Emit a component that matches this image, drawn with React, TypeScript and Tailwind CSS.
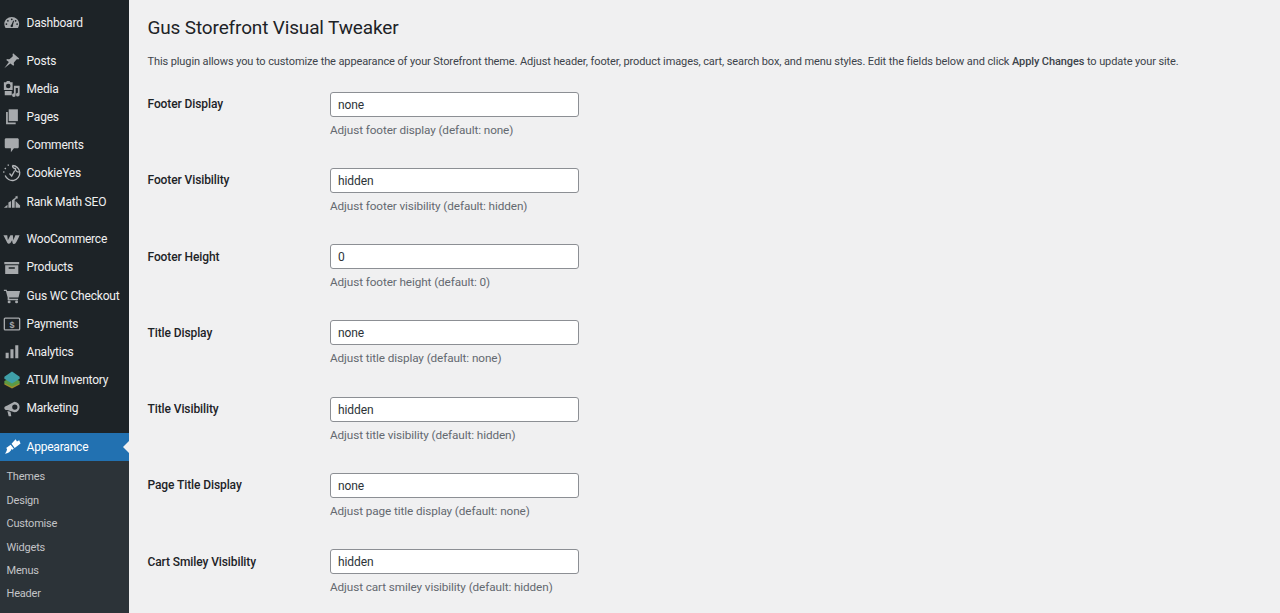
import type { ReactNode } from 'react';

const icon = 'h-[17.500px] w-[17.500px] fill-[#a7aaad]';

const Dashboard = () => (
  <svg viewBox="0 0 20 20" className={icon}>
    <path fillRule="evenodd" d="M10 3.500c-4.600 0-8.500 3.400-8.500 8 0 1.700.5 3.200 1.400 4.500h14.200c.9-1.300 1.400-2.800 1.400-4.500 0-4.600-3.900-8-8.500-8zM10 5a1 1 0 110 2 1 1 0 010-2zM5.600 6.800a1 1 0 110 2 1 1 0 010-2zM14.400 6.800a1 1 0 110 2 1 1 0 010-2zM3.900 10.500a1 1 0 110 2 1 1 0 010-2zM16.100 10.500a1 1 0 110 2 1 1 0 010-2zM11.700 7.500l.9.400-1.300 4.900c.3.400.4.800.2 1.300-.3.800-1.200 1.100-1.900.8-.8-.3-1.100-1.200-.8-1.900.2-.5.600-.8 1-.9z" />
  </svg>
);
const Pin = () => (
  <svg viewBox="0 0 20 20" className={icon}>
    <path d="M11.500 1.500l7 6-1 1.200c-.8-.4-1.700-.4-2.300.2l-2.500 2.800c-.5.700-.5 2 .1 3l-1 1.100-3.400-2.700L1.500 18.500l5.200-7-3-2.500 1-1.100c1 .4 2.200.5 3 0l3-2.500c.6-.7.600-1.700.2-2.600z" />
  </svg>
);
const Media = () => (
  <svg viewBox="0 0 20 20" className={icon}>
    <path fillRule="evenodd" d="M1 2.500h2.500l1-1.500h3l1 1.500H11v9H1zM6 4.200a2.600 2.600 0 100 5.200 2.600 2.600 0 000-5.200z" />
    <path d="M12.500 6.500H19v10.200a2.100 2.100 0 11-2-2V9h-2.500v8.200a2.100 2.100 0 11-2-2zM2 12.500h8v5H2z" />
  </svg>
);
const Pages = () => (
  <svg viewBox="0 0 20 20" className={icon}>
    <path d="M6.500 1.500h10.500v13.500H6.500z" />
    <path d="M3.500 4.500h2v12h9v2h-11z" />
  </svg>
);
const Comment = () => (
  <svg viewBox="0 0 20 20" className={icon}>
    <path d="M3.500 2.500h13c.8 0 1.500.7 1.500 1.500v8.500c0 .8-.7 1.500-1.500 1.500h-4L9 18.500V14H3.500c-.8 0-1.500-.7-1.500-1.500V4c0-.8.7-1.500 1.500-1.500z" />
  </svg>
);
const Cookie = () => (
  <svg viewBox="0 0 20 20" className="h-[20px] w-[20px] fill-none stroke-[#b4b7ba] stroke-[1.300]">
    <path d="M10.500 2.500a7.500 7.500 0 11-7.300 10M10.500 2.500a2.800 2.800 0 003 3 3 3 0 003.300 3.500" />
    <path d="M7.500 10.500l2.200 2.500 3-5.500" />
    <path d="M2.800 5l1 1M6 1.500l.5 1.200M1.200 9h1.200" />
  </svg>
);
const RankMath = () => (
  <svg viewBox="0 0 20 20" className="h-[18px] w-[18px] fill-[#a7aaad]">
    <path d="M1 16.500l4-3.500v3.500zM6 16.500v-6l3-1.500v7.500zM10 16.500V8l3-2.500v11zM14 16.500V9l5 5v2.500zM13 4.500l3-1.500.5 3.500-1-.7-2.500 2-.8-1 2-1.600z" />
  </svg>
);
const Woo = () => (
  <svg viewBox="0 0 20 20" className="h-[17px] w-[17px] fill-[#a7aaad]">
    <path d="M.5 5h4.500l.7 6 3-6h2.900l.6 6 2.300-6h5c-1.300 3.500-3.200 7.500-5.300 10-1.300.4-2.600.3-3-1.200l-.5-3-2 3.200c-1.200 1.200-2.800 1.500-3.700-.3z" />
  </svg>
);
const Archive = () => (
  <svg viewBox="0 0 20 20" className={icon}>
    <path fillRule="evenodd" d="M1.500 3.500h17v2.500h-17zM2.500 7h15v10h-15zM6.500 9.500V11h7V9.500z" />
  </svg>
);
const Cart = () => (
  <svg viewBox="0 0 20 20" className={icon}>
    <path d="M1 3h3.200l.5 1.500H19.500l-1.800 7.500H7l.2 1.500h10v1.500H5.300V12L3.300 4.500H1z" />
    <circle cx="7" cy="17" r="1.700" />
    <circle cx="15.500" cy="17" r="1.700" />
  </svg>
);
const Payments = () => (
  <svg viewBox="0 0 20 20" className="h-[18px] w-[18px]">
    <rect x="1.500" y="3.500" width="17" height="13" rx="1" fill="none" stroke="#a7aaad" strokeWidth="1.500" />
    <text x="10" y="14" textAnchor="middle" fontSize="10" fontWeight="700" fill="#a7aaad" fontFamily="'Liberation Sans', sans-serif">$</text>
  </svg>
);
const Analytics = () => (
  <svg viewBox="0 0 20 20" className={icon}>
    <path d="M3 11h3.500v6.500H3zM8.500 7H12v10.500H8.500zM14 2.500h3.500v15H14z" />
  </svg>
);
const Atum = () => (
  <svg viewBox="0 0 20 20" className="h-[18px] w-[18px]">
    <path d="M10 10l8.500 3.500v1.500L10 19.500 1.500 15v-1.500z" fill="#a08f2c" />
    <path d="M10 7l8.500 4v2.500L10 17.500 1.500 13.500V11z" fill="#5c9a45" />
    <path d="M10 .5l8.500 6v2L10 14 1.500 8.500v-2z" fill="#3f9fa8" />
  </svg>
);
const Megaphone = () => (
  <svg viewBox="0 0 20 20" className={icon}>
    <path fillRule="evenodd" d="M13 2a6 6 0 110 12L5 11.500c-2.600-.4-3.500-1-3.500-2.500S3 6.700 5 6.200zM13.500 5a3 3 0 100 6 3 3 0 000-6z" />
    <path d="M5 12.500l3.500.8 1 5.200H6.500z" />
  </svg>
);
const Brush = () => (
  <svg viewBox="0 0 20 20" className="h-[18px] w-[18px] fill-white">
    <path d="M14 1.500l1.500 2.500L18 2.500l1.500 3.500-6.500 5-3.500-4.500zM8.500 7.500l3.500 4.500-1.500 1-1-.8c-.8 2.700-3.800 4.800-7.500 5.300 1.500-1.700 2.300-3.200 2.500-5.300L3.500 11z" />
  </svg>
);

type MenuRow = { label: string; glyph: ReactNode; gap?: boolean };

const menu: MenuRow[] = [
  { label: 'Dashboard', glyph: <Dashboard /> },
  { label: 'Posts', glyph: <Pin />, gap: true },
  { label: 'Media', glyph: <Media /> },
  { label: 'Pages', glyph: <Pages /> },
  { label: 'Comments', glyph: <Comment /> },
  { label: 'CookieYes', glyph: <Cookie /> },
  { label: 'Rank Math SEO', glyph: <RankMath /> },
  { label: 'WooCommerce', glyph: <Woo />, gap: true },
  { label: 'Products', glyph: <Archive /> },
  { label: 'Gus WC Checkout', glyph: <Cart /> },
  { label: 'Payments', glyph: <Payments /> },
  { label: 'Analytics', glyph: <Analytics /> },
  { label: 'ATUM Inventory', glyph: <Atum /> },
  { label: 'Marketing', glyph: <Megaphone /> },
];

const submenu = ['Themes', 'Design', 'Customise', 'Widgets', 'Menus', 'Header'];

const fields = [
  { label: 'Footer Display', value: 'none', help: 'Adjust footer display (default: none)' },
  { label: 'Footer Visibility', value: 'hidden', help: 'Adjust footer visibility (default: hidden)' },
  { label: 'Footer Height', value: '0', help: 'Adjust footer height (default: 0)' },
  { label: 'Title Display', value: 'none', help: 'Adjust title display (default: none)' },
  { label: 'Title Visibility', value: 'hidden', help: 'Adjust title visibility (default: hidden)' },
  { label: 'Page Title Display', value: 'none', help: 'Adjust page title display (default: none)' },
  { label: 'Cart Smiley Visibility', value: 'hidden', help: 'Adjust cart smiley visibility (default: hidden)' },
];

function Sidebar() {
  return (
    <aside className="h-full w-[129px] shrink-0 overflow-hidden bg-[#1d2327] pt-[9px] text-[12px] tracking-[-0.2px] text-[#f0f0f1]">
      {menu.map((row) => (
        <div
          key={row.label}
          className={`flex h-[28.200px] items-center ${row.gap ? 'mt-[9.400px]' : ''}`}
        >
          <span className="mr-[3.500px] flex w-[23px] shrink-0 items-center justify-center">{row.glyph}</span>
          <span className="whitespace-nowrap">{row.label}</span>
        </div>
      ))}
      <div className="relative mt-[10.400px] flex h-[28.200px] items-center bg-[#2271b1] text-white">
        <span className="mr-[3.500px] flex w-[23px] shrink-0 items-center justify-center">
          <Brush />
        </span>
        <span>Appearance</span>
        <span className="absolute right-0 top-[8px] h-0 w-0 border-y-[6px] border-r-[6px] border-y-transparent border-r-[#f0f0f1]" />
      </div>
      <div className="bg-[#2c3338] pt-[5px] pb-[20px] text-[11px] tracking-[-0.2px] text-[#c3c4c7]">
        {submenu.map((item) => (
          <div key={item} className="flex h-[23.400px] items-center pl-[6.500px]">
            {item}
          </div>
        ))}
      </div>
    </aside>
  );
}

function Field({ label, value, help }: { label: string; value: string; help: string }) {
  return (
    <div className="flex h-[76.250px] items-start">
      <label className="w-[182.500px] shrink-0 pt-[2.500px] text-[12px] leading-[20px] font-medium tracking-[-0.1px] text-[#1d2327]">
        {label}
      </label>
      <div>
        <input
          readOnly
          value={value}
          className="block h-[25px] w-[249px] rounded-[3px] border border-[#8c8f94] bg-white px-[7px] pt-[1px] text-[12px] tracking-[-0.1px] text-[#2c3338] outline-none"
        />
        <p className="mt-[3px] text-[11.750px] leading-[20px] tracking-[-0.1px] text-[#646970]">{help}</p>
      </div>
    </div>
  );
}

export default function App() {
  return (
    <div className="flex h-[613px] w-[1280px] overflow-hidden bg-[#f0f0f1] font-['Roboto','Open_Sans',sans-serif]">
      <Sidebar />
      <main className="flex-1 pl-[18.500px] text-[#3c434a]">
        <h1 className="pt-[13.500px] text-[19px] leading-[28px] font-normal tracking-[-0.15px] text-[#1d2327]">
          Gus Storefront Visual Tweaker
        </h1>
        <p className="mt-[10px] text-[11px] leading-[20px] tracking-[-0.1px] whitespace-nowrap">
          This plugin allows you to customize the appearance of your Storefront theme. Adjust header, footer, product
          images, cart, search box, and menu styles. Edit the fields below and click{' '}
          <strong className="font-medium">Apply Changes</strong> to update your site.
        </p>
        <div className="mt-[20px]">
          {fields.map((field) => (
            <Field key={field.label} {...field} />
          ))}
        </div>
      </main>
    </div>
  );
}
